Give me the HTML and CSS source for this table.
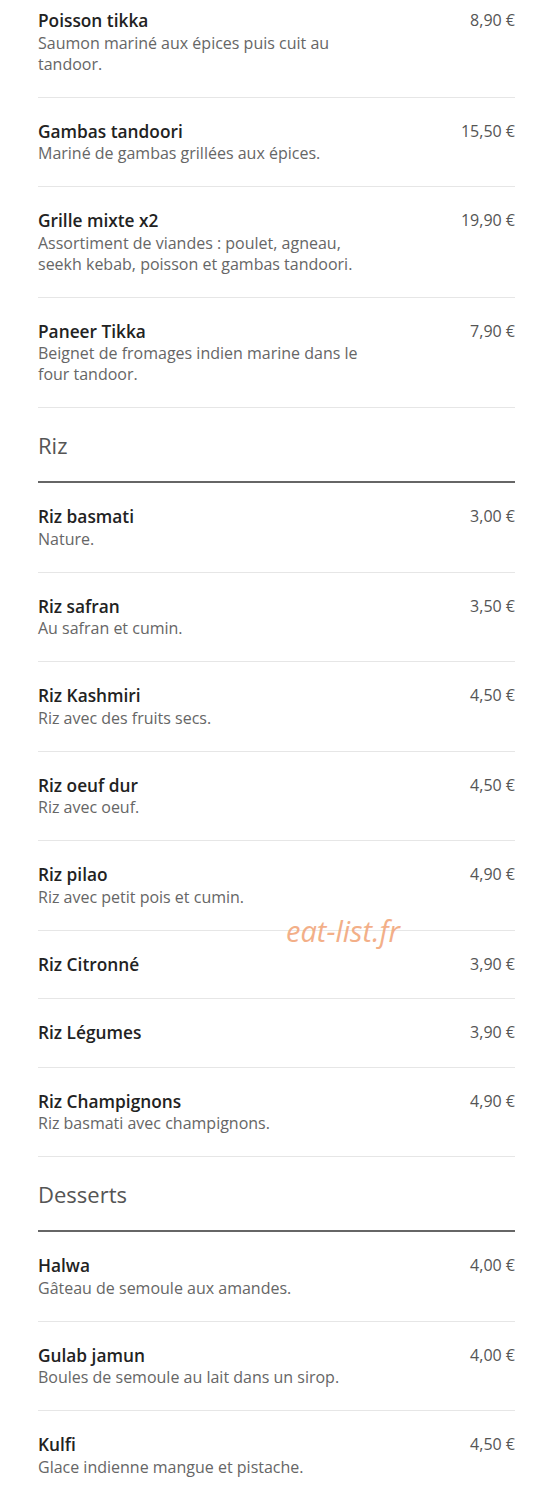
FILE: index.html
```html
<!DOCTYPE html>
<html>
<head>
  <title>Carte - Tandoori, Riz, Desserts</title>
  <link rel="stylesheet" href="styles.css">
</head>
<body>
  <div class="menu">
    <div class="item">
      <div class="info">
        <div class="name">Poisson tikka</div>
        <div class="desc">Saumon mariné aux épices puis cuit au tandoor.</div>
      </div>
      <div class="price">8,90 €</div>
    </div>
    <div class="item">
      <div class="info">
        <div class="name">Gambas tandoori</div>
        <div class="desc">Mariné de gambas grillées aux épices.</div>
      </div>
      <div class="price">15,50 €</div>
    </div>
    <div class="item">
      <div class="info">
        <div class="name">Grille mixte x2</div>
        <div class="desc">Assortiment de viandes : poulet, agneau, seekh kebab, poisson et gambas tandoori.</div>
      </div>
      <div class="price">19,90 €</div>
    </div>
    <div class="item">
      <div class="info">
        <div class="name">Paneer Tikka</div>
        <div class="desc">Beignet de fromages indien marine dans le four tandoor.</div>
      </div>
      <div class="price">7,90 €</div>
    </div>

    <h2 class="section">Riz</h2>
    <div class="item">
      <div class="info">
        <div class="name">Riz basmati</div>
        <div class="desc">Nature.</div>
      </div>
      <div class="price">3,00 €</div>
    </div>
    <div class="item">
      <div class="info">
        <div class="name">Riz safran</div>
        <div class="desc">Au safran et cumin.</div>
      </div>
      <div class="price">3,50 €</div>
    </div>
    <div class="item">
      <div class="info">
        <div class="name">Riz Kashmiri</div>
        <div class="desc">Riz avec des fruits secs.</div>
      </div>
      <div class="price">4,50 €</div>
    </div>
    <div class="item">
      <div class="info">
        <div class="name">Riz oeuf dur</div>
        <div class="desc">Riz avec oeuf.</div>
      </div>
      <div class="price">4,50 €</div>
    </div>
    <div class="item">
      <div class="info">
        <div class="name">Riz pilao</div>
        <div class="desc">Riz avec petit pois et cumin.</div>
      </div>
      <div class="price">4,90 €</div>
    </div>
    <div class="item">
      <div class="info">
        <div class="name">Riz Citronné</div>
      </div>
      <div class="price">3,90 €</div>
    </div>
    <div class="item">
      <div class="info">
        <div class="name">Riz Légumes</div>
      </div>
      <div class="price">3,90 €</div>
    </div>
    <div class="item">
      <div class="info">
        <div class="name">Riz Champignons</div>
        <div class="desc">Riz basmati avec champignons.</div>
      </div>
      <div class="price">4,90 €</div>
    </div>

    <h2 class="section">Desserts</h2>
    <div class="item">
      <div class="info">
        <div class="name">Halwa</div>
        <div class="desc">Gâteau de semoule aux amandes.</div>
      </div>
      <div class="price">4,00 €</div>
    </div>
    <div class="item">
      <div class="info">
        <div class="name">Gulab jamun</div>
        <div class="desc">Boules de semoule au lait dans un sirop.</div>
      </div>
      <div class="price">4,00 €</div>
    </div>
    <div class="item">
      <div class="info">
        <div class="name">Kulfi</div>
        <div class="desc">Glace indienne mangue et pistache.</div>
      </div>
      <div class="price">4,50 €</div>
    </div>
  </div>

  <div class="watermark">eat-list.fr</div>
</body>
</html>
```

FILE: styles.css
```css
body { margin: 0; background: #fff; font-family: "Open Sans", "Liberation Sans", sans-serif; color: #333; }
.menu { margin: 0 35px 0 38px; }
.item { display: flex; justify-content: space-between; align-items: flex-start; padding: 22px 0; border-bottom: 1px solid #e6e6e6; }
.item:first-child { padding-top: 9px; }
.info { max-width: 330px; }
.name { font-size: 17.3px; font-weight: 600; line-height: 23.5px; color: #222; }
.desc { font-size: 16px; line-height: 21px; color: #666; }
.price { font-size: 16px; line-height: 23.5px; color: #555; white-space: nowrap; }
.section { margin: 0; padding: 23px 0 22px; font-size: 22px; font-weight: 400; line-height: 28px; color: #555; border-bottom: 2px solid #666; }
.watermark { position: absolute; left: 286px; top: 911px; font-size: 29px; font-style: italic; color: #f2a77c; opacity: 0.9; }
```
